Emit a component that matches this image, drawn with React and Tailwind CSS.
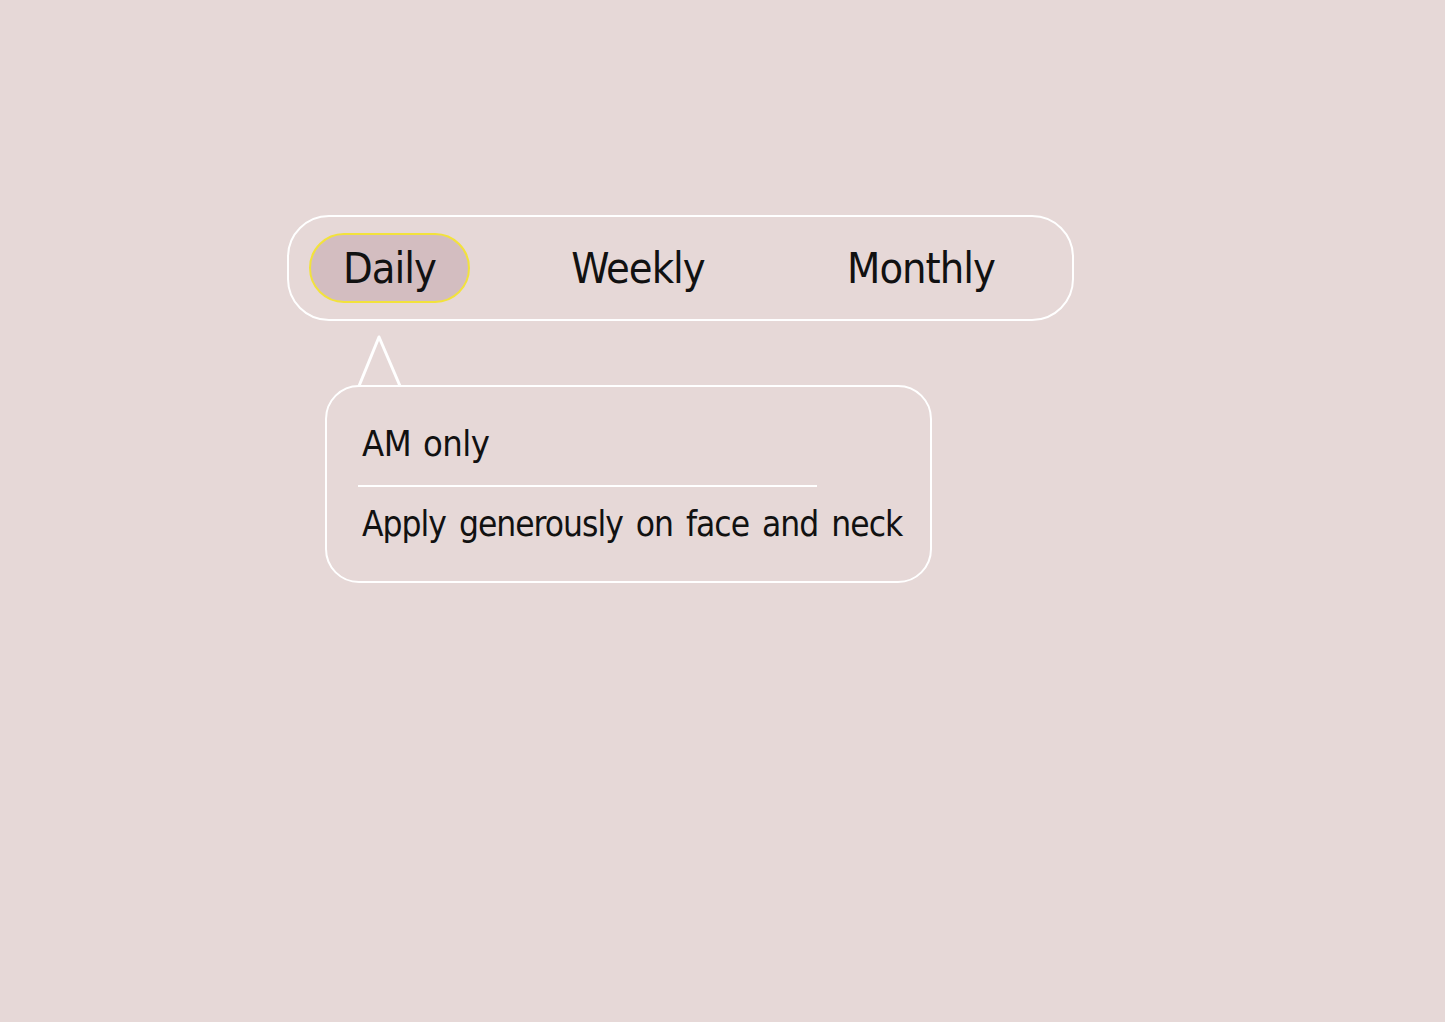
import React, { useState } from 'react';

const App = () => {
    const [active, setActive] = useState('Daily');

    const tabClass = (name) =>
        `flex h-[70px] items-center justify-center rounded-full border-2 text-[43px] tracking-[-1px] ${active === name ? 'border-[#f2e23c] bg-[#d3bdc0]' : 'border-transparent'}`;

    return (
        <div
            className="min-h-screen w-full bg-[#e6d8d7] text-[#111] pt-[215px] pl-[287px]"
            style={{ fontFamily: '"DejaVu Sans Condensed", "DejaVu Sans", sans-serif' }}
        >
            {/* Period toggle */}
            <div className="flex h-[106px] w-[787px] items-center rounded-[42px] border-2 border-white pl-[20px]">
                <button onClick={() => setActive('Daily')} className={`w-[161px] ${tabClass('Daily')}`}>
                    Daily
                </button>
                <button onClick={() => setActive('Weekly')} className={`ml-[64px] w-[208px] ${tabClass('Weekly')}`}>
                    Weekly
                </button>
                <button onClick={() => setActive('Monthly')} className={`ml-[69px] w-[220px] ${tabClass('Monthly')}`}>
                    Monthly
                </button>
            </div>

            {/* Tooltip */}
            <div className="ml-[38px] mt-[13px] flex w-[607px] flex-col">
                <svg width="48" height="54" viewBox="0 0 48 54" className="ml-[31px] -mb-[3px] block">
                    <path d="M3 52 L23 3 L44 52" fill="none" stroke="#fff" strokeWidth="3" strokeLinejoin="round" />
                </svg>
                <div className="h-[198px] rounded-[34px] border-2 border-white pl-[35px] pt-[36px]">
                    <p className="whitespace-nowrap text-[36px] leading-[42px] tracking-[-0.5px] [word-spacing:2px]">AM only</p>
                    <div className="-ml-[4px] mt-[20px] h-[2px] w-[459px] bg-white" />
                    <p className="mt-[16px] whitespace-nowrap text-[35px] leading-[42px] tracking-[-1px] [word-spacing:4px]">
                        Apply generously on face and neck
                    </p>
                </div>
            </div>
        </div>
    );
};

export default App;
